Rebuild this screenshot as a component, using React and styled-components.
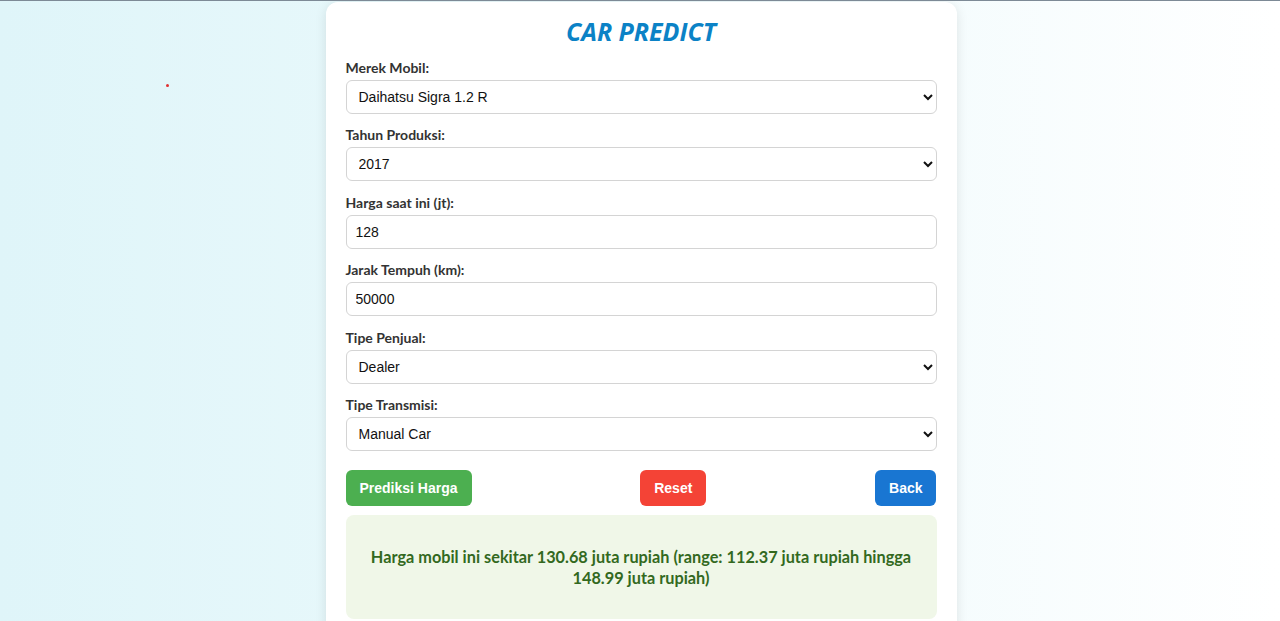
import React, { useState } from "react";
import styled, { createGlobalStyle } from "styled-components";

const GlobalStyle = createGlobalStyle`
  html, body {
    margin: 0;
    padding: 0;
  }
  body {
    min-height: 100vh;
    background: linear-gradient(to right, #dff5f9 0%, #eefafc 55%, #ffffff 100%);
    border-top: 1px solid #7d8a96;
    font-family: Lato, "Noto Sans", sans-serif;
  }
`;

const Page = styled.div`
  position: relative;
  min-height: 620px;
  padding-left: 2px;
`;

const Dot = styled.span`
  position: absolute;
  left: 166px;
  top: 82px;
  width: 3px;
  height: 3px;
  border-radius: 50%;
  background: #e03030;
`;

const Card = styled.div`
  width: 591px;
  margin: 1px auto 0;
  padding: 15px 20px 20px;
  background: #ffffff;
  border-radius: 12px;
  box-shadow: 0 2px 12px rgba(0, 0, 0, 0.1);
`;

const Title = styled.h1`
  margin: 0 0 13px;
  text-align: center;
  font-family: "Open Sans", sans-serif;
  font-style: italic;
  font-weight: 700;
  font-size: 25px;
  line-height: 29px;
  color: #0b82c6;
`;

const Group = styled.div`
  margin-bottom: 12.4px;
`;

const Label = styled.label`
  display: block;
  margin-bottom: 4px;
  font-size: 14px;
  line-height: 17px;
  font-weight: 700;
  color: #333333;
`;

const fieldCss = `
  box-sizing: border-box;
  width: 100%;
  height: 34px;
  border: 1px solid #d4d4d4;
  border-radius: 6px;
  background: #ffffff;
  font-family: "Liberation Sans", Arial, sans-serif;
  font-size: 14px;
  color: #111111;
  outline: none;
`;

const Select = styled.select`
  ${fieldCss}
  padding: 0 6px 0 8px;
`;

const Input = styled.input`
  ${fieldCss}
  padding: 0 9px;
`;

const Actions = styled.div`
  display: flex;
  justify-content: space-between;
  margin-top: 19px;
`;

const Button = styled.button`
  height: 36px;
  padding: 0 14px;
  border: none;
  border-radius: 6px;
  background: ${(p) => p.$bg};
  color: #ffffff;
  font-family: "Liberation Sans", Arial, sans-serif;
  font-weight: 700;
  font-size: 14px;
  cursor: pointer;
`;

const Result = styled.div`
  margin-top: 9px;
  padding: 31px 20px;
  background: #f0f7e8;
  border-radius: 8px;
  text-align: center;
  font-weight: 700;
  font-size: 16.3px;
  line-height: 21px;
  color: #33691e;
`;

const fields = [
  { label: "Merek Mobil:", type: "select", value: "Daihatsu Sigra 1.2 R", options: ["Daihatsu Sigra 1.2 R", "Toyota Avanza 1.3 G", "Honda Brio Satya"] },
  { label: "Tahun Produksi:", type: "select", value: "2017", options: ["2015", "2016", "2017", "2018", "2019"] },
  { label: "Harga saat ini (jt):", type: "input", value: "128" },
  { label: "Jarak Tempuh (km):", type: "input", value: "50000" },
  { label: "Tipe Penjual:", type: "select", value: "Dealer", options: ["Dealer", "Individual"] },
  { label: "Tipe Transmisi:", type: "select", value: "Manual Car", options: ["Manual Car", "Automatic Car"] },
];

const App = () => {
  const [values, setValues] = useState(fields.map((f) => f.value));
  const update = (i, v) => setValues((prev) => prev.map((x, j) => (j === i ? v : x)));

  return (
    <Page>
      <GlobalStyle />
      <Dot />
      <Card>
        <Title>CAR PREDICT</Title>
        {fields.map((f, i) => (
          <Group key={f.label}>
            <Label>{f.label}</Label>
            {f.type === "select" ? (
              <Select value={values[i]} onChange={(e) => update(i, e.target.value)}>
                {f.options.map((o) => (
                  <option key={o}>{o}</option>
                ))}
              </Select>
            ) : (
              <Input value={values[i]} onChange={(e) => update(i, e.target.value)} />
            )}
          </Group>
        ))}
        <Actions>
          <Button $bg="#4caf50">Prediksi Harga</Button>
          <Button $bg="#f44336">Reset</Button>
          <Button $bg="#1976d2">Back</Button>
        </Actions>
        <Result>
          Harga mobil ini sekitar 130.68 juta rupiah (range: 112.37 juta rupiah hingga 148.99 juta rupiah)
        </Result>
      </Card>
    </Page>
  );
};

export default App;
